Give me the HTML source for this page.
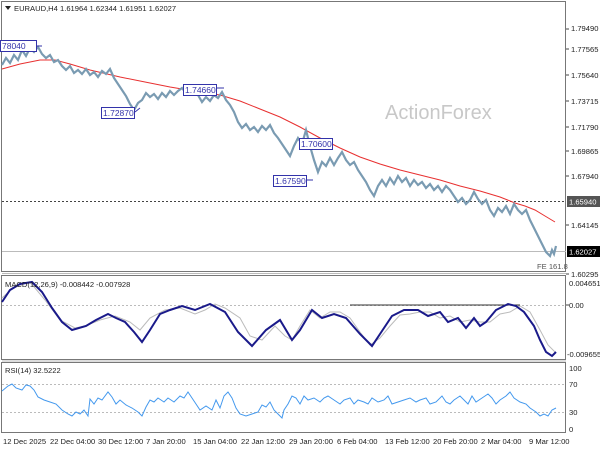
<!DOCTYPE html>
<html><head><meta charset="utf-8"><style>
html,body{margin:0;padding:0;background:#fff;width:600px;height:450px;overflow:hidden}
svg text{font-family:"Liberation Sans",sans-serif;font-size:7.6px;fill:#222}
</style></head><body>
<svg width="600" height="450" viewBox="0 0 600 450" xmlns="http://www.w3.org/2000/svg">
<rect width="600" height="450" fill="#fff"/>
<g fill="none" stroke="#777" stroke-width="1">
<rect x="1.5" y="1.5" width="564" height="270"/>
<rect x="1.5" y="275.5" width="564" height="84"/>
<rect x="1.5" y="362.5" width="564" height="70"/>
</g>
<line x1="2" y1="273.5" x2="566" y2="273.5" stroke="#bbb"/>
<line x1="2" y1="361" x2="566" y2="361" stroke="#bbb"/>
<text x="385" y="119" style="font-size:20px;fill:#c8c8c8;font-family:'Liberation Sans',sans-serif">ActionForex</text>
<path d="M5 6 L11 6 L8 10 Z" fill="#222"/>
<text x="14" y="11">EURAUD,H4  1.61964 1.62344 1.61951 1.62027</text>
<line x1="2" y1="201.5" x2="566" y2="201.5" stroke="#444" stroke-dasharray="2,2"/>
<line x1="2" y1="251.5" x2="566" y2="251.5" stroke="#bbb"/>
<polyline fill="none" stroke="#e83030" stroke-width="1" points="2,69 20,64 40,60 55,60 70,64 90,70 120,77 150,83 170,87 200,92 220,95 240,101 260,109 280,117 300,127 320,138 340,148 360,157 380,164 400,170 420,175 440,180 460,186 480,191 500,197 515,203 525,206 535,210 545,216 555,222"/>
<polyline fill="none" stroke="#7a9bb2" stroke-width="2.2" stroke-linejoin="miter" points="2,65 6,58 10,63 14,55 18,60 22,50 26,56 30,48 34,52 38,47 42,54 46,58 50,55 54,62 58,60 62,66 66,70 70,66 74,73 78,70 82,74 86,69 90,75 94,72 98,77 102,71 106,74 110,69 114,78 118,84 122,90 126,96 130,104 134,110 138,103 142,100 146,93 150,97 154,94 158,99 162,93 166,97 170,91 174,95 178,91 182,88 186,93 190,86 194,92 198,95 202,102 206,97 210,101 214,95 218,98 222,92 226,100 230,105 234,112 238,122 242,128 246,124 250,130 254,127 258,132 262,126 266,130 270,125 274,133 278,138 282,144 286,150 290,156 294,146 298,138 302,144 306,130 310,146 314,160 318,172 322,162 326,166 330,158 334,165 338,158 342,152 346,160 350,165 354,162 358,170 362,176 366,182 370,190 374,196 378,186 382,180 386,186 390,178 394,184 398,176 402,182 406,178 410,186 414,180 418,185 422,182 426,188 430,184 434,190 438,186 442,192 446,186 450,190 454,196 458,202 462,198 466,204 470,200 474,192 478,199 482,204 486,200 490,210 494,216 498,208 502,212 506,206 510,214 514,204 518,210 522,214 526,210 530,220 534,228 538,236 542,244 546,252 550,256 552,250 554,254 556,246"/>
<g>
<rect x="0.5" y="40.5" width="36" height="11" fill="#fff" stroke="#3333aa"/><text x="2" y="49" style="fill:#3333aa;font-size:8.5px">78040</text>
<line x1="37" y1="46" x2="42" y2="46" stroke="#3333aa"/>
<rect x="101.5" y="107.5" width="33" height="11" fill="#fff" stroke="#3333aa"/><text x="103" y="116" style="fill:#3333aa;font-size:8.5px">1.72870</text>
<line x1="135" y1="112" x2="140" y2="108" stroke="#3333aa"/>
<rect x="183.5" y="84.5" width="33" height="11" fill="#fff" stroke="#3333aa"/><text x="185" y="93" style="fill:#3333aa;font-size:8.5px">1.74660</text>
<line x1="217" y1="88" x2="224" y2="88" stroke="#3333aa"/>
<rect x="299.5" y="138.5" width="33" height="11" fill="#fff" stroke="#3333aa"/><text x="301" y="147" style="fill:#3333aa;font-size:8.5px">1.70600</text>
<rect x="273.5" y="175.5" width="33" height="11" fill="#fff" stroke="#3333aa"/><text x="275" y="184" style="fill:#3333aa;font-size:8.5px">1.67590</text>
<line x1="307" y1="180" x2="313" y2="180" stroke="#3333aa"/>
</g>
<text x="537" y="269" style="fill:#555">FE 161.8</text>
<g>
<line x1="566" y1="29" x2="569" y2="29" stroke="#444"/><text x="571" y="31">1.79490</text>
<line x1="566" y1="49" x2="569" y2="49" stroke="#444"/><text x="571" y="52">1.77565</text>
<line x1="566" y1="75" x2="569" y2="75" stroke="#444"/><text x="571" y="78">1.75640</text>
<line x1="566" y1="101" x2="569" y2="101" stroke="#444"/><text x="571" y="104">1.73715</text>
<line x1="566" y1="127" x2="569" y2="127" stroke="#444"/><text x="571" y="130">1.71790</text>
<line x1="566" y1="151" x2="569" y2="151" stroke="#444"/><text x="571" y="154">1.69865</text>
<line x1="566" y1="176" x2="569" y2="176" stroke="#444"/><text x="571" y="179">1.67940</text>
<line x1="566" y1="225" x2="569" y2="225" stroke="#444"/><text x="571" y="228">1.64145</text>
<line x1="566" y1="274" x2="569" y2="274" stroke="#444"/><text x="571" y="277">1.60295</text>
<rect x="567" y="196" width="33" height="11" fill="#555"/><text x="569" y="204.5" style="fill:#fff">1.65940</text>
<rect x="567" y="246" width="33" height="11" fill="#000"/><text x="569" y="254.5" style="fill:#fff">1.62027</text>
</g>
<line x1="2" y1="305.5" x2="566" y2="305.5" stroke="#bbb" stroke-dasharray="2,2"/>
<line x1="350" y1="305" x2="520" y2="305" stroke="#333"/>
<polyline fill="none" stroke="#bbb" stroke-width="1" points="2,298 15,286 30,282 45,300 60,320 75,328 85,326 100,320 115,316 130,322 140,330 150,318 165,310 180,308 195,314 205,310 215,304 225,308 240,318 250,336 262,340 275,326 285,336 292,340 300,326 310,310 320,318 330,312 340,312 350,318 360,332 370,345 380,338 390,326 400,315 410,314 420,312 430,312 440,318 450,316 460,322 470,320 480,322 490,322 500,314 510,312 520,306 530,312 540,330 548,345 555,352"/>
<polyline fill="none" stroke="#1a1a8a" stroke-width="2" points="2,302 10,290 20,284 32,282 42,292 52,308 62,322 72,330 86,326 96,320 108,314 116,318 125,322 134,332 142,342 150,330 160,314 170,310 182,306 195,310 210,304 225,312 238,332 252,346 266,330 280,320 292,340 300,330 312,310 322,318 334,314 346,318 360,334 372,346 380,334 392,316 404,310 418,310 428,316 440,312 448,322 458,318 466,328 474,318 480,326 486,322 496,310 508,304 516,306 524,312 534,326 540,340 546,352 552,356 556,352"/>
<text x="5" y="287">MACD(12,26,9) -0.008442 -0.007928</text>
<text x="569" y="286">0.004651</text>
<rect x="567" y="300" width="33" height="11" fill="#fff"/><text x="569" y="308">0.00</text>
<line x1="566" y1="305" x2="569" y2="305" stroke="#444"/>
<text x="567" y="357">-0.009655</text>
<line x1="2" y1="384.5" x2="566" y2="384.5" stroke="#bbb" stroke-dasharray="2,2"/>
<line x1="2" y1="412.5" x2="566" y2="412.5" stroke="#bbb" stroke-dasharray="2,2"/>
<polyline fill="none" stroke="#4499ee" stroke-width="1" points="2,391 8,386 12,384 16,388 22,390 26,385 30,386 34,390 38,397 44,400 50,402 56,404 62,410 68,414 72,416 76,412 80,414 84,410 88,416 90,399 94,404 98,398 102,400 108,392 112,397 116,404 120,400 126,405 132,408 138,412 142,416 146,407 150,400 154,402 158,398 164,402 168,398 174,402 180,396 184,398 188,392 192,398 196,404 200,410 206,406 212,410 216,400 220,408 224,396 228,392 232,398 236,408 240,414 246,416 252,414 258,412 262,405 266,407 270,402 274,410 278,414 282,418 284,410 288,404 292,396 296,398 300,404 304,396 308,400 314,398 320,402 324,398 328,396 334,400 340,404 344,400 350,398 354,404 358,400 364,402 368,404 372,398 378,402 384,400 388,396 392,404 398,402 404,400 410,398 416,402 420,400 426,398 430,404 436,402 442,396 446,402 450,404 454,400 460,396 464,400 468,404 472,396 476,402 482,398 488,394 492,398 496,404 500,400 506,396 510,392 514,398 520,402 526,404 530,408 536,412 540,416 544,414 548,416 552,410 556,408"/>
<text x="5" y="373">RSI(14) 32.5222</text>
<text x="569" y="371">100</text>
<text x="569" y="387">70</text>
<text x="569" y="415">30</text>
<text x="569" y="432">0</text>
<g>
<text x="3" y="444">12 Dec 2025</text>
<text x="50" y="444">22 Dec 04:00</text>
<text x="98" y="444">30 Dec 12:00</text>
<text x="146" y="444">7 Jan 20:00</text>
<text x="193" y="444">15 Jan 04:00</text>
<text x="241" y="444">22 Jan 12:00</text>
<text x="289" y="444">29 Jan 20:00</text>
<text x="337" y="444">6 Feb 04:00</text>
<text x="385" y="444">13 Feb 12:00</text>
<text x="433" y="444">20 Feb 20:00</text>
<text x="481" y="444">2 Mar 04:00</text>
<text x="529" y="444">9 Mar 12:00</text>
</g>
</svg>
</body></html>
